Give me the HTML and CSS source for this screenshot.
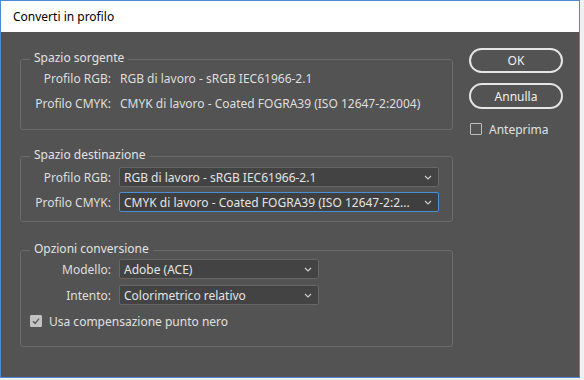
FILE: index.html
```html
<!DOCTYPE html>
<html lang="it">
<head>
    <meta charset="UTF-8">
    <meta name="viewport" content="width=device-width, initial-scale=1.0">
    <title>Converti in profilo</title>
    <link rel="stylesheet" href="styles.css">
</head>
<body>
    <div class="window">
        <div class="titlebar">Converti in profilo</div>

        <div class="dialog">
            <div class="main">
                <section class="group group-source">
                    <div class="group-title">Spazio sorgente</div>
                    <div class="rows">
                        <span class="label">Profilo RGB:</span>
                        <span class="value">RGB di lavoro - sRGB IEC61966-2.1</span>
                        <span class="label">Profilo CMYK:</span>
                        <span class="value">CMYK di lavoro - Coated FOGRA39 (ISO 12647-2:2004)</span>
                    </div>
                </section>

                <section class="group group-dest">
                    <div class="group-title">Spazio destinazione</div>
                    <div class="rows">
                        <span class="label">Profilo RGB:</span>
                        <div class="select wide">
                            <span class="select-text">RGB di lavoro - sRGB IEC61966-2.1</span>
                            <svg class="chevron" width="8" height="5" viewBox="0 0 8 5"><polyline points="1,1 4,4 7,1" /></svg>
                        </div>
                        <span class="label">Profilo CMYK:</span>
                        <div class="select wide focused">
                            <span class="select-text">CMYK di lavoro - Coated FOGRA39 (ISO 12647-2:2...</span>
                            <svg class="chevron" width="8" height="5" viewBox="0 0 8 5"><polyline points="1,1 4,4 7,1" /></svg>
                        </div>
                    </div>
                </section>

                <section class="group group-options">
                    <div class="group-title">Opzioni conversione</div>
                    <div class="rows">
                        <span class="label">Modello:</span>
                        <div class="select narrow">
                            <span class="select-text">Adobe (ACE)</span>
                            <svg class="chevron" width="8" height="5" viewBox="0 0 8 5"><polyline points="1,1 4,4 7,1" /></svg>
                        </div>
                        <span class="label">Intento:</span>
                        <div class="select narrow">
                            <span class="select-text">Colorimetrico relativo</span>
                            <svg class="chevron" width="8" height="5" viewBox="0 0 8 5"><polyline points="1,1 4,4 7,1" /></svg>
                        </div>
                        <label class="check check-wide">
                            <span class="box checked">
                                <svg width="10" height="10" viewBox="0 0 10 10"><polyline points="2,5.2 4.2,7.4 8,2.6" /></svg>
                            </span>
                            Usa compensazione punto nero
                        </label>
                    </div>
                </section>
            </div>

            <div class="actions">
                <button class="btn">OK</button>
                <button class="btn">Annulla</button>
                <label class="check">
                    <span class="box"></span>
                    Anteprima
                </label>
            </div>
        </div>
    </div>
</body>
</html>
```

FILE: styles.css
```css
body {
    margin: 0;
    background-color: #eef0f2;
    font-family: "Noto Sans", "Open Sans", sans-serif;
    font-size: 12px;
}
.window {
    width: 578px;
    height: 376px;
    border: 1px solid #4a8ad6;
    background-color: #535353;
    display: flex;
    flex-direction: column;
}
.titlebar {
    height: 31px;
    box-sizing: border-box;
    padding: 6px 0 0 12px;
    line-height: 20px;
    background: #fff;
    color: #000;
}
.dialog {
    flex: 1;
    display: flex;
    gap: 16px;
    padding: 16px 15px 0 19px;
    color: #dedede;
}
.main {
    width: 433px;
    padding-top: 11px;
}
.group {
    border: 1px solid #6a6a6a;
    border-radius: 3px;
}
.group-title {
    width: fit-content;
    margin: -10px 0 0 9px;
    padding: 0 4px;
    line-height: 16px;
    background-color: #535353;
    color: #e2e2e2;
}
.rows {
    display: grid;
    grid-template-columns: 90px auto;
    justify-content: start;
    align-items: center;
    column-gap: 8px;
}
.label {
    text-align: right;
    line-height: 20px;
    white-space: nowrap;
}
.value {
    line-height: 20px;
    padding-left: 1px;
    white-space: nowrap;
}

.group-source .rows {
    margin-top: 3px;
    row-gap: 5px;
    padding-bottom: 15px;
}
.group-dest {
    margin-top: 26px;
}
.group-dest .rows {
    margin-top: 4px;
    row-gap: 5px;
    padding-bottom: 9px;
}
.group-dest .label,
.group-options .label {
    padding-top: 1px;
    line-height: 19px;
}
.group-options {
    margin-top: 28px;
}
.group-options .rows {
    margin-top: 2px;
    row-gap: 6px;
    padding-bottom: 15px;
}

.select {
    height: 20px;
    box-sizing: border-box;
    border: 1px solid #666;
    border-radius: 2px;
    background-color: #434343;
    display: flex;
    align-items: center;
    padding: 1px 6px 0 4px;
    color: #e4e4e4;
}
.select.wide {
    width: 320px;
}
.select.narrow {
    width: 200px;
}
.select.focused {
    border-color: #4a8ed8;
    background-color: #3f3f3f;
}
.select-text {
    flex: 1;
    white-space: nowrap;
    overflow: hidden;
}
.chevron polyline {
    fill: none;
    stroke: #cfcfcf;
    stroke-width: 1.1;
}

.check {
    display: flex;
    align-items: center;
    gap: 7px;
    height: 20px;
    color: #e0e0e0;
}
.check-wide {
    grid-column: 1 / 3;
    padding-left: 9px;
}
.box {
    width: 12px;
    height: 12px;
    box-sizing: border-box;
    border: 1px solid #bdbdbd;
    border-radius: 1px;
    display: flex;
    align-items: center;
    justify-content: center;
}
.box.checked {
    background-color: #c2c2c2;
    border-color: #c2c2c2;
}
.box polyline {
    fill: none;
    stroke: #5e5e5e;
    stroke-width: 1.5;
}

.actions {
    width: 94px;
    display: flex;
    flex-direction: column;
}
.btn {
    height: 25px;
    border: 2px solid #e6e6e6;
    border-radius: 13px;
    background-color: #535353;
    color: #f0f0f0;
    font-family: inherit;
    font-size: 12px;
    padding: 0;
}
.btn + .btn {
    margin-top: 10px;
    height: 26px;
}
.actions .check {
    margin-top: 10px;
    padding-left: 1px;
}
```
